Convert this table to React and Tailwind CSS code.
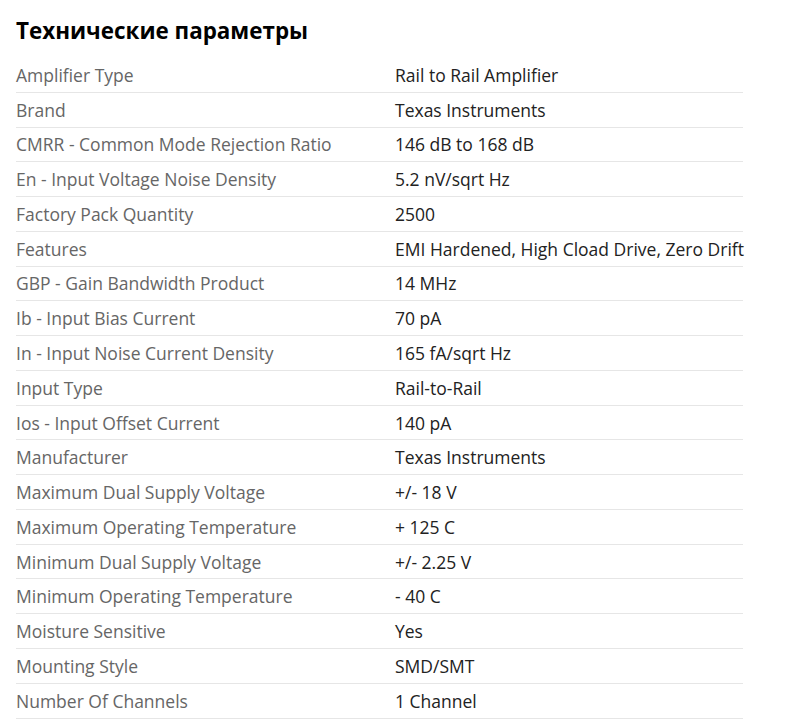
const specs = [
  ["Amplifier Type", "Rail to Rail Amplifier"],
  ["Brand", "Texas Instruments"],
  ["CMRR - Common Mode Rejection Ratio", "146 dB to 168 dB"],
  ["En - Input Voltage Noise Density", "5.2 nV/sqrt Hz"],
  ["Factory Pack Quantity", "2500"],
  ["Features", "EMI Hardened, High Cload Drive, Zero Drift"],
  ["GBP - Gain Bandwidth Product", "14 MHz"],
  ["Ib - Input Bias Current", "70 pA"],
  ["In - Input Noise Current Density", "165 fA/sqrt Hz"],
  ["Input Type", "Rail-to-Rail"],
  ["Ios - Input Offset Current", "140 pA"],
  ["Manufacturer", "Texas Instruments"],
  ["Maximum Dual Supply Voltage", "+/- 18 V"],
  ["Maximum Operating Temperature", "+ 125 C"],
  ["Minimum Dual Supply Voltage", "+/- 2.25 V"],
  ["Minimum Operating Temperature", "- 40 C"],
  ["Moisture Sensitive", "Yes"],
  ["Mounting Style", "SMD/SMT"],
  ["Number Of Channels", "1 Channel"],
];

export default function App() {
  return (
    <div className="min-h-[719px] bg-white px-4 pt-[15px] font-['Open_Sans',sans-serif]">
      <h2 className="text-[22.4px] font-bold leading-[32px] text-black">
        Технические параметры
      </h2>
      <div className="mt-[11px] w-[727px]">
        {specs.map(([name, value]) => (
          <div
            key={name}
            className="flex h-[34.78px] items-center border-b border-[#e6e6e6] text-[17.5px] leading-[24px]"
          >
            <div className="w-[379px] shrink-0 text-[#666666]">{name}</div>
            <div className="whitespace-nowrap text-[#222222]">{value}</div>
          </div>
        ))}
      </div>
    </div>
  );
}
